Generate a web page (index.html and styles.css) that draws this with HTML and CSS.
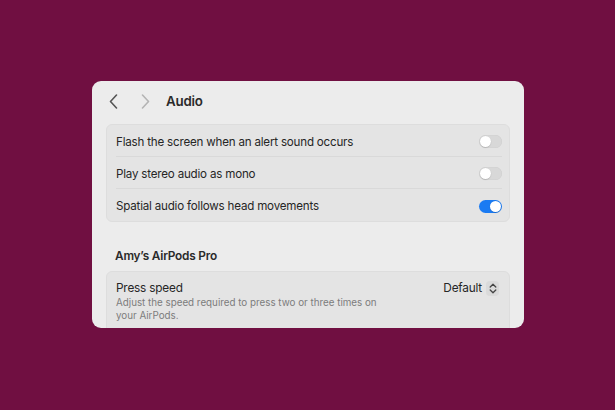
FILE: index.html
```html
<!DOCTYPE html>
<html>
<head>
<meta charset="utf-8">
<link rel="stylesheet" href="styles.css">
</head>
<body>
<div class="window">
  <div class="header">
    <span class="nav back"><svg width="9" height="15" viewBox="0 0 9 15"><path d="M7.5 1 L1.5 7.5 L7.5 14" fill="none" stroke="#555" stroke-width="1.6" stroke-linecap="round" stroke-linejoin="round"/></svg></span>
    <span class="nav fwd"><svg width="9" height="15" viewBox="0 0 9 15"><path d="M1.5 1 L7.5 7.5 L1.5 14" fill="none" stroke="#b4b4b4" stroke-width="1.6" stroke-linecap="round" stroke-linejoin="round"/></svg></span>
    <span class="title">Audio</span>
  </div>
  <div class="group">
    <div class="row"><span>Flash the screen when an alert sound occurs</span><span class="toggle"></span></div>
    <div class="row"><span>Play stereo audio as mono</span><span class="toggle"></span></div>
    <div class="row"><span>Spatial audio follows head movements</span><span class="toggle on"></span></div>
  </div>
  <div class="section">Amy’s AirPods Pro</div>
  <div class="group group2">
    <div class="row tall">
      <div class="text">
        <div class="label">Press speed</div>
        <div class="desc">Adjust the speed required to press two or three times on<br>your AirPods.</div>
      </div>
      <div class="select">Default <span class="stepper"><svg width="8" height="11" viewBox="0 0 8 11"><path d="M1.2 4 L4 1.3 L6.8 4 M1.2 7 L4 9.7 L6.8 7" fill="none" stroke="#444" stroke-width="1.3" stroke-linecap="round" stroke-linejoin="round"/></svg></span></div>
    </div>
  </div>
</div>
</body>
</html>
```
FILE: styles.css
```css
* { box-sizing: border-box; }
html, body { margin: 0; padding: 0; }
body {
  background: #700f41;
  width: 615px;
  height: 410px;
  overflow: hidden;
  font-family: "Inter", "Liberation Sans", sans-serif;
  color: #262626;
  padding: 81px 0 0 92px;
}
.window {
  width: 432px;
  height: 247px;
  background: #ececec;
  border-radius: 9px;
  overflow: hidden;
}
.header {
  height: 40px;
  display: flex;
  align-items: center;
}
.nav { display: flex; }
.back { margin-left: 17px; }
.fwd { margin-left: 23px; }
.title {
  margin-left: 16px;
  font-size: 13.3px;
  font-weight: 600;
  color: #2a2a2a;
  letter-spacing: -0.2px;
}
.group {
  margin: 3px 14px 0;
  background: #e4e4e4;
  border: 1px solid #dddddd;
  border-radius: 6px;
  padding: 0 7px 0 9px;
}
.row {
  height: 32px;
  padding-top: 2px;
  display: flex;
  align-items: center;
  justify-content: space-between;
  font-size: 11.6px;
  letter-spacing: -0.2px;
  border-bottom: 1px solid #d9d9d9;
}
.row:last-child { border-bottom: none; }
.toggle {
  width: 23px;
  height: 13px;
  border-radius: 7px;
  background: #d8d8d8;
  position: relative;
  box-shadow: inset 0 0 0 0.5px #cfcfcf;
}
.toggle::after {
  content: "";
  position: absolute;
  left: 1px;
  top: 1px;
  width: 11px;
  height: 11px;
  border-radius: 50%;
  background: #fff;
  box-shadow: 0 0.5px 1px rgba(0,0,0,0.25);
}
.toggle.on { background: #1b7bf2; box-shadow: none; }
.toggle.on::after { left: 11px; }
.section {
  margin: 26px 0 0 23px;
  font-size: 11.8px;
  font-weight: 600;
  letter-spacing: -0.2px;
  height: 16px;
  line-height: 16px;
  color: #2a2a2a;
}
.group2 { margin-top: 7px; }
.row.tall {
  height: auto;
  align-items: flex-start;
  padding-top: 8px;
  padding-bottom: 12px;
}
.label { font-size: 11.8px; line-height: 16px; }
.desc {
  font-size: 9.8px;
  letter-spacing: 0;
  line-height: 13px;
  color: #7c7c7c;
}
.select {
  display: flex;
  align-items: center;
  font-size: 11.8px;
  line-height: 16px;
  margin-right: 3px;
}
.stepper {
  margin-left: 4px;
  width: 13px;
  height: 15px;
  border-radius: 4px;
  background: #dadada;
  display: flex;
  align-items: center;
  justify-content: center;
}
```
